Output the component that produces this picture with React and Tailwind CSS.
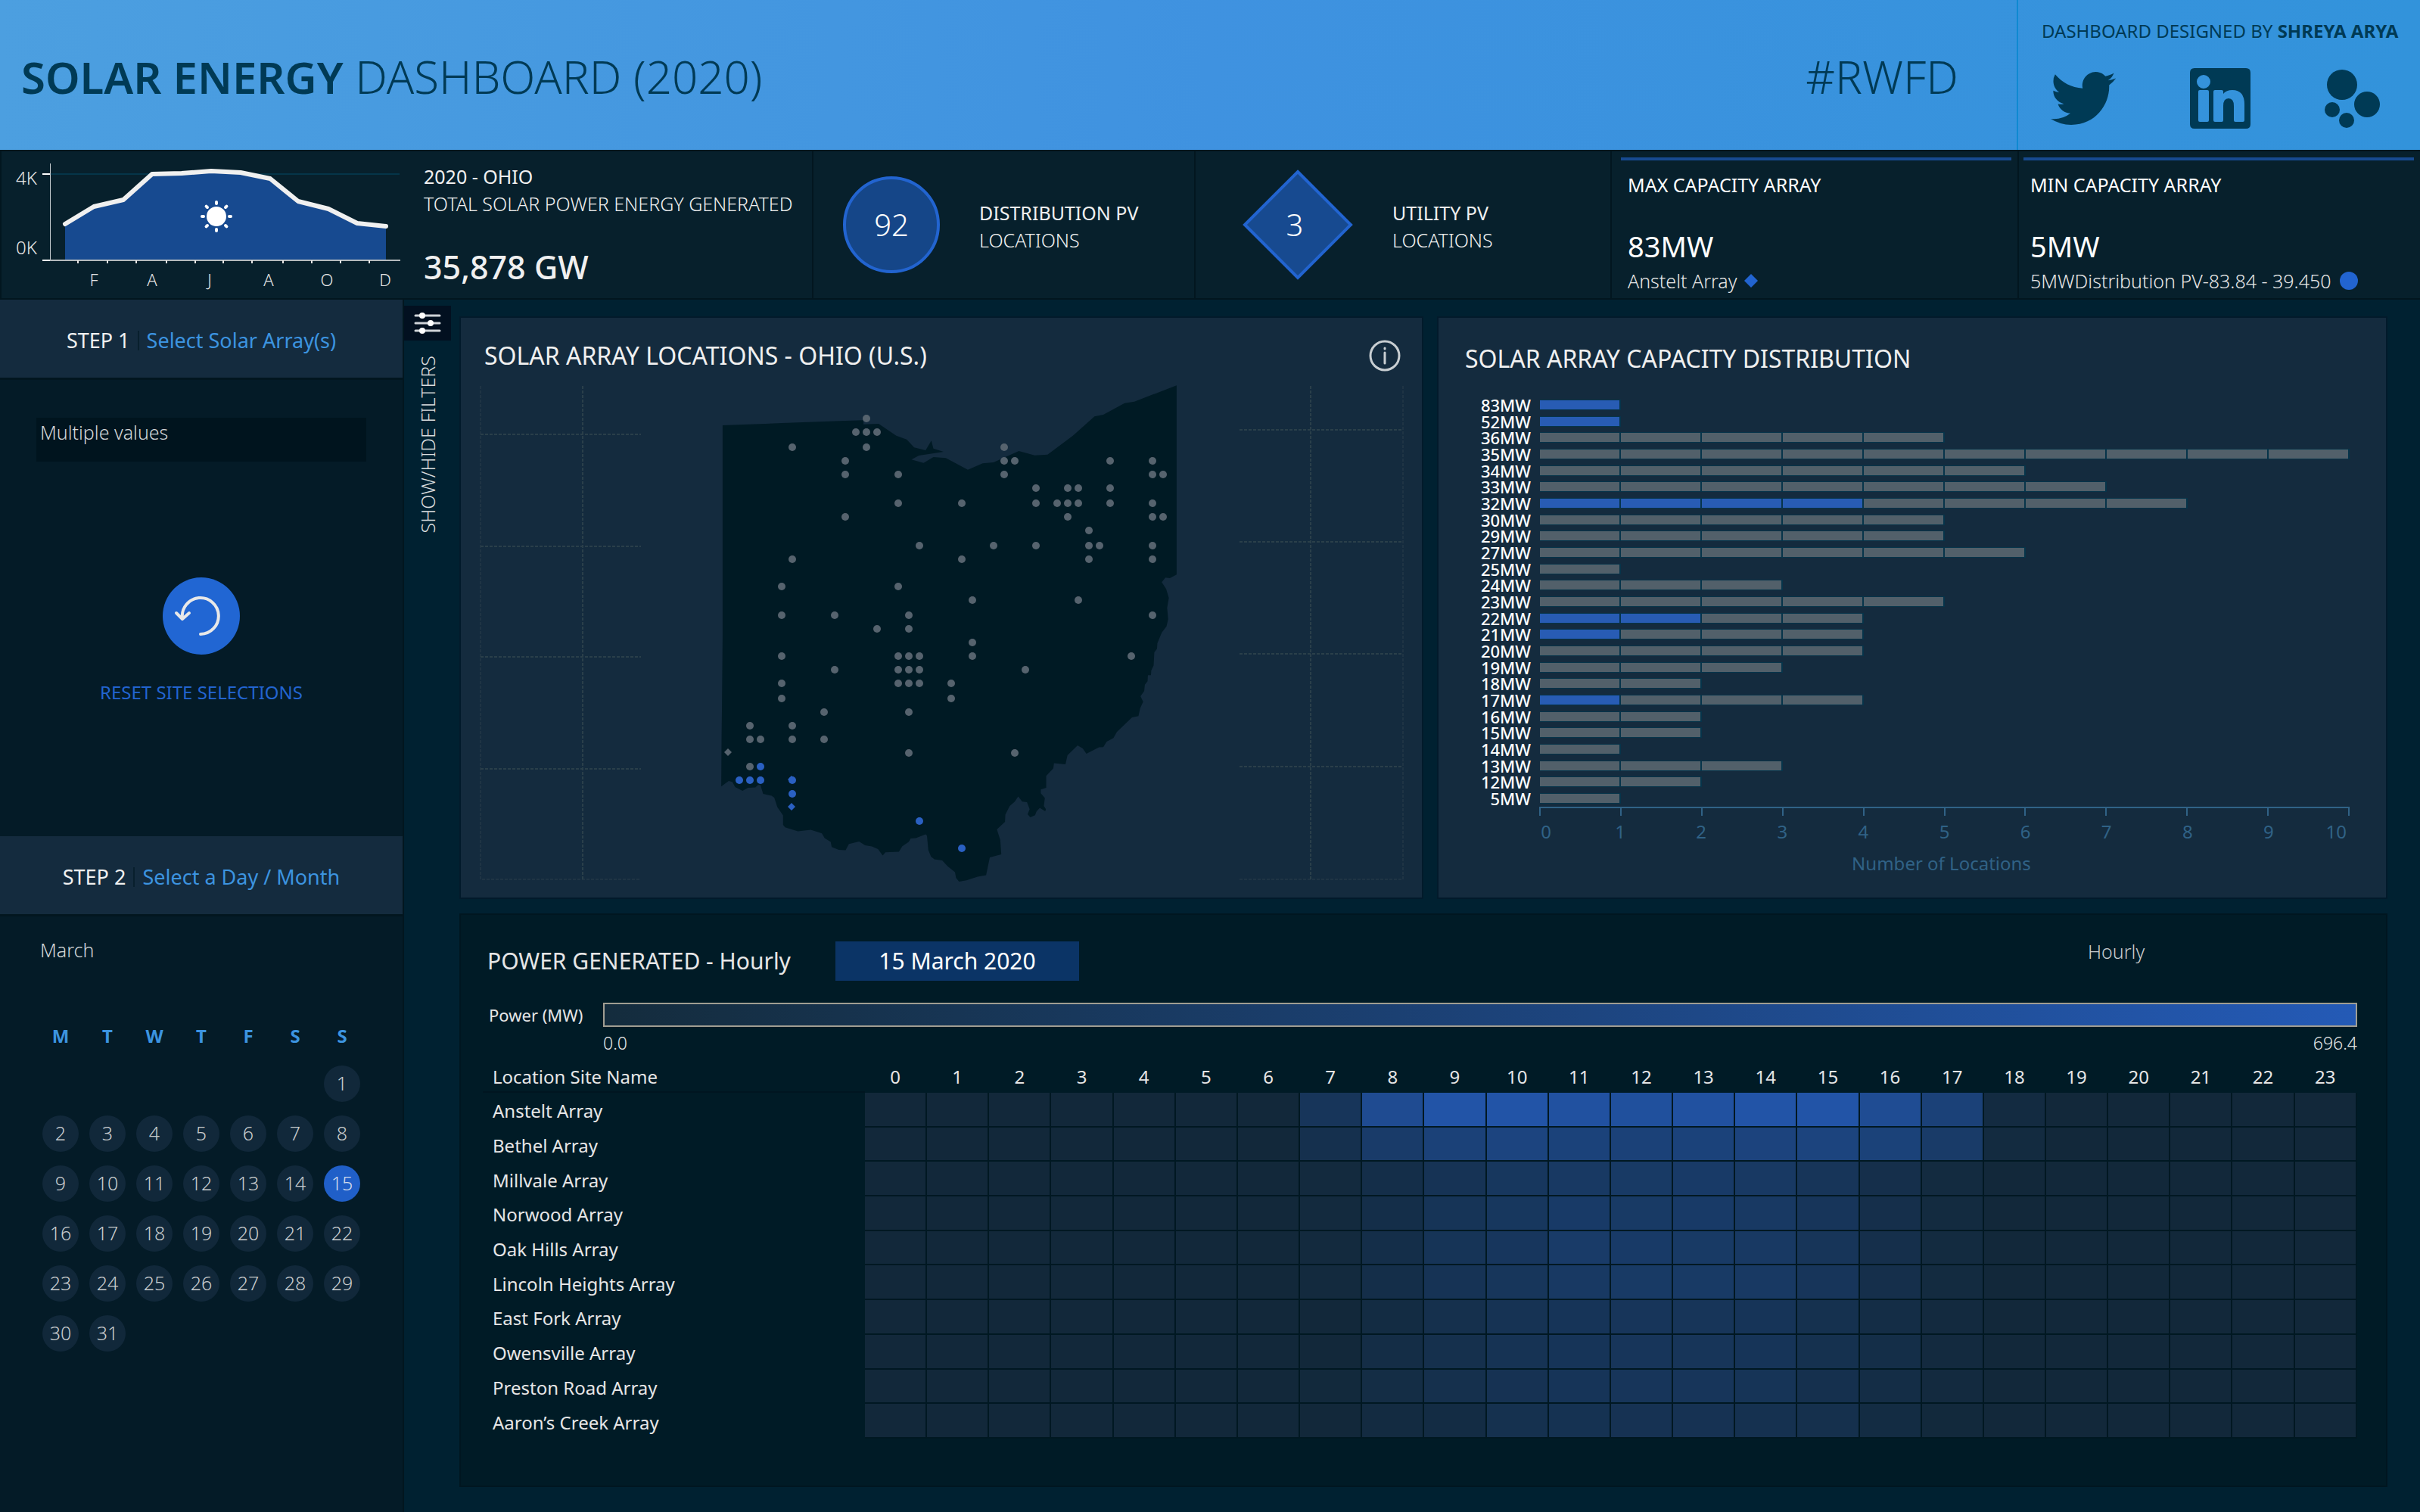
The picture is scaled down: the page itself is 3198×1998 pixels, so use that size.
/**
 * Solar Energy Dashboard
 * Single page: header, KPI strip, filter sidebar, map, distribution and hourly heatmap
 */

import React from 'react';

// ==================== DATA ====================
const MONTHLY = [
  [86, 296], [124, 273], [163, 264], [201, 230], [240, 229], [279, 226],
  [318, 228], [357, 236], [394, 266], [434, 276], [472, 295], [510, 299],
];

const MONTH_LABELS = [
  { x: 124, label: 'F' },
  { x: 201, label: 'A' },
  { x: 277, label: 'J' },
  { x: 355, label: 'A' },
  { x: 432, label: 'O' },
  { x: 509, label: 'D' },
];

const MONTH_TICKS = [103, 142, 180, 220, 258, 295, 333, 374, 412, 450, 488];

// capacity label, total locations, selected locations
const CAPACITY = [
  ['83MW', 1, 1], ['52MW', 1, 1], ['36MW', 5, 0], ['35MW', 10, 0], ['34MW', 6, 0],
  ['33MW', 7, 0], ['32MW', 8, 4], ['30MW', 5, 0], ['29MW', 5, 0], ['27MW', 6, 0],
  ['25MW', 1, 0], ['24MW', 3, 0], ['23MW', 5, 0], ['22MW', 4, 2], ['21MW', 4, 1],
  ['20MW', 4, 0], ['19MW', 3, 0], ['18MW', 2, 0], ['17MW', 4, 1], ['16MW', 2, 0],
  ['15MW', 2, 0], ['14MW', 1, 0], ['13MW', 3, 0], ['12MW', 2, 0], ['5MW', 1, 0],
];

// map rows: y, columns of unselected sites, columns of selected sites
const SITES = [
  [553, [12], []],
  [571, [11, 12, 13], []],
  [591, [5, 12, 25], []],
  [609, [10, 25, 26, 35, 39], []],
  [627, [10, 15, 25, 39, 40], []],
  [645, [28, 31, 32, 35], []],
  [665, [15, 21, 28, 30, 31, 32, 35, 39], []],
  [683, [10, 31, 39, 40], []],
  [701, [33], []],
  [721, [17, 24, 28, 33, 34, 39], []],
  [739, [5, 21, 33, 39], []],
  [775, [4, 15], []],
  [793, [22, 32], []],
  [813, [4, 9, 16, 39], []],
  [831, [13, 16], []],
  [849, [22], []],
  [867, [4, 15, 16, 17, 22, 37], []],
  [885, [9, 15, 16, 17, 27], []],
  [903, [4, 15, 16, 17, 20], []],
  [923, [4, 20], []],
  [941, [8, 16], []],
  [959, [1, 5], []],
  [977, [1, 2, 5, 8], []],
  [995, [16, 26], []],
  [1013, [1], [2]],
  [1031, [], [0, 1, 2, 5]],
  [1049, [], [5]],
  [1085, [], [17]],
  [1121, [], [21]],
];

const OHIO =
  'M123 216L170 214L300 207L470 199L540 196L540 212L585 210L637 257L668 272L690 304L724 315L741 277L747 308L777 321L704 336L682 352L718 365L747 342L784 346L849 392L893 367L925 363L1000 318L1047 335L1085 332L1160 257L1224 181L1250 174L1313 128L1342 122L1467 58L1467 808L1447 822L1434 820L1423 838L1436 865L1444 900L1439 940L1442 985L1437 1013L1423 1038L1410 1080L1409 1102L1401 1116L1399 1168L1392 1188L1391 1207L1382 1207L1381 1231L1373 1244L1371 1270L1360 1290L1368 1312L1359 1338L1354 1369L1335 1374L1290 1432L1280 1456L1260 1470L1250 1492L1237 1493L1200 1518L1189 1497L1174 1485L1144 1524L1138 1560L1104 1556L1102 1576L1081 1606L1081 1653L1065 1660L1065 1675L1077 1694L1074 1725L1080 1738L1078 1746L1062 1733L1052 1748L1048 1762L1034 1770L1026 1758L1032 1738L1024 1710L1010 1708L998 1688L988 1708L973 1725L960 1760L959 1788L935 1818L945 1860L948 1917L914 1929L903 2000L878 2006L845 2020L823 2025L814 2010L811 1988L790 1965L773 1941L750 1937L740 1926L732 1900L728 1843L724 1838L695 1853L680 1854L674 1868L655 1885L645 1907L605 1909L597 1922L583 1896L565 1886L545 1881L527 1866L497 1876L487 1901L467 1899L446 1888L443 1868L425 1853L417 1834L384 1820L346 1826L308 1810L302 1800L302 1763L285 1730L276 1692L268 1685L243 1677L235 1642L228 1642L220 1652L198 1653L182 1665L160 1650L152 1630L141 1626L119 1648L120 1450L121 1350L123 1050Z';

// hourly output from 7:00 to 18:00, in percent of the scale maximum
const HEATMAP = [
  ['Anstelt Array', [26, 70, 88, 88, 82, 80, 82, 88, 88, 72, 50, 6]],
  ['Bethel Array', [16, 38, 50, 56, 52, 50, 52, 54, 55, 51, 37, 5]],
  ['Millvale Array', [3, 12, 22, 29, 33, 35, 36, 33, 25, 14, 5, 0]],
  ['Norwood Array', [3, 12, 23, 29, 36, 35, 36, 33, 26, 14, 5, 0]],
  ['Oak Hills Array', [3, 12, 23, 28, 37, 36, 35, 33, 25, 14, 5, 0]],
  ['Lincoln Heights Array', [3, 12, 22, 27, 33, 35, 35, 33, 26, 14, 5, 0]],
  ['East Fork Array', [0, 7, 15, 21, 24, 26, 25, 24, 17, 10, 4, 0]],
  ['Owensville Array', [0, 10, 15, 21, 24, 26, 25, 24, 17, 11, 4, 0]],
  ['Preston Road Array', [2, 9, 15, 20, 24, 26, 26, 23, 16, 10, 4, 0]],
  ['Aaron’s Creek Array', [0, 6, 8, 17, 19, 20, 20, 18, 15, 7, 2, 0]],
];

const HOURS = Array.from({ length: 24 }, (_, i) => i);
const DAYS = Array.from({ length: 31 }, (_, i) => i + 1);
const WEEKDAYS = ['M', 'T', 'W', 'T', 'F', 'S', 'S'];

const LOW = [18, 40, 58];
const HIGH = [36, 90, 182];

const heatColor = (percent) => {
  const [r, g, b] = LOW.map((c, i) => Math.round(c + ((HIGH[i] - c) * percent) / 100));
  return `rgb(${r}, ${g}, ${b})`;
};

// ==================== HEADER ====================
const TwitterIcon = () => (
  <svg viewBox="0 0 24 24" className="w-[86px] h-[86px]" fill="currentColor" aria-hidden="true">
    <path d="M23.953 4.57a10 10 0 01-2.825.775 4.958 4.958 0 002.163-2.723c-.951.555-2.005.959-3.127 1.184a4.92 4.92 0 00-8.384 4.482C7.69 8.095 4.067 6.13 1.64 3.162a4.822 4.822 0 00-.666 2.475c0 1.71.87 3.213 2.188 4.096a4.904 4.904 0 01-2.228-.616v.06a4.923 4.923 0 003.946 4.827 4.996 4.996 0 01-2.212.085 4.936 4.936 0 004.604 3.417 9.867 9.867 0 01-6.102 2.105c-.39 0-.779-.023-1.17-.067a13.995 13.995 0 007.557 2.209c9.053 0 13.998-7.496 13.998-13.985 0-.21 0-.42-.015-.63A9.935 9.935 0 0024 4.59z" />
  </svg>
);

const LinkedinIcon = () => (
  <svg viewBox="0 0 80 80" className="w-20 h-20" aria-hidden="true">
    <path
      fill="currentColor"
      fillRule="evenodd"
      d="M6 0H74Q80 0 80 6V74Q80 80 74 80H6Q0 80 0 74V6Q0 0 6 0ZM18 9A9 9 0 1 0 18 27A9 9 0 1 0 18 9ZM13 29Q11 29 11 31V69Q11 71 13 71H23Q25 71 25 69V31Q25 29 23 29ZM33 29Q31 29 31 31V69Q31 71 33 71H42Q44 71 44 69V50Q44 40 51 40Q58 40 58 50V69Q58 71 60 71H70Q72 71 72 69V48Q72 29 56 29Q48 29 44 34V31Q44 29 42 29Z"
    />
  </svg>
);

const DotsIcon = () => (
  <svg viewBox="0 0 74 80" className="w-[74px] h-20" fill="currentColor" aria-hidden="true">
    <circle cx="23" cy="22" r="20" />
    <circle cx="56" cy="48" r="17" />
    <circle cx="10" cy="55" r="10" />
    <circle cx="29" cy="69" r="10" />
  </svg>
);

const Header = () => (
  <header className="flex h-[198px] bg-linear-to-r from-[#4c9fe0] via-[#3f92e0] to-[#3293db] text-[#003a55]">
    <div className="flex flex-1 items-center justify-between pt-1 pl-7 pr-[77px] text-[60px] leading-[72px]">
      <h1 className="font-light">
        <strong className="text-[58px] font-semibold">SOLAR ENERGY</strong> DASHBOARD (2020)
      </h1>
      <p className="font-light">#RWFD</p>
    </div>
    <div className="flex w-[533px] flex-col border-l-2 border-[#0f89d1] pt-[23px] pl-[31px] pr-7">
      <p className="text-2xl leading-9 whitespace-nowrap">
        DASHBOARD DESIGNED BY <strong className="font-bold">SHREYA ARYA</strong>
      </p>
      <div className="mt-7 flex items-center justify-between pr-6 pl-3">
        <a href="#twitter" aria-label="Twitter"><TwitterIcon /></a>
        <a href="#linkedin" aria-label="LinkedIn"><LinkedinIcon /></a>
        <a href="#portfolio" aria-label="Portfolio"><DotsIcon /></a>
      </div>
    </div>
  </header>
);

// ==================== KPI STRIP ====================
const Sparkline = () => {
  const line = MONTHLY.map(([x, y]) => `${x},${y}`).join(' ');

  return (
    <svg viewBox="2 200 556 194" className="w-[556px] shrink-0" role="img" aria-label="Monthly energy">
      <path d="M66 230H528" stroke="#053549" strokeWidth="2" />
      <polygon points={`86,343 ${line} 510,343`} fill="#174a90" />
      <polyline points={line} fill="none" stroke="#f0f0f0" strokeWidth="6" strokeLinejoin="round" strokeLinecap="round" />
      <path d="M66.500 216V343" stroke="#c5cbcf" strokeWidth="1" />
      <path d="M56 344H529" stroke="#b4babd" strokeWidth="2" />
      <path d="M56 344H66M56 230H66" stroke="#ffffff" strokeWidth="2" />
      {MONTH_TICKS.map((x) => (
        <path key={x} d={`M${x} 344V348`} stroke="#e6e6e6" strokeWidth="2" />
      ))}
      <g fill="#ffffff" stroke="#ffffff" strokeWidth="4" strokeLinecap="round">
        <circle cx="286" cy="286" r="11" />
        {[0, 45, 90, 135, 180, 225, 270, 315].map((a) => (
          <path key={a} d="M286 267V269" transform={`rotate(${a} 286 286)`} />
        ))}
      </g>
      <g fill="#e6e6e6" fontSize="24" fontWeight="300" textAnchor="middle">
        <text x="35" y="244">4K</text>
        <text x="35" y="336">0K</text>
        {MONTH_LABELS.map(({ x, label }) => (
          <text key={x} x={x} y="378" fontSize="22">{label}</text>
        ))}
      </g>
    </svg>
  );
};

const CapacityStat = ({ title, value, name, marker, last = false }) => (
  <div className={last ? 'pt-2 pl-[6px]' : 'border-r-2 border-[#02161f] pt-2 pl-3'}>
    <div className="mr-2 h-1 bg-[#174a90]" />
    <div className="mt-[14px] pl-[9px] text-[25px] leading-9 whitespace-nowrap">
      <p className="text-white">{title}</p>
      <p className="mt-[39px] text-[38px] leading-12 text-white">{value}</p>
      <p className="mt-1 flex items-center font-light text-[#e6e6e6]">
        {name}
        {marker}
      </p>
    </div>
  </div>
);

const KpiStrip = () => (
  <section className="grid h-[198px] grid-cols-[1075fr_505fr_550fr_538fr_530fr] border-y-2 border-[#02161f] bg-[#07202c] text-[25px] leading-9 text-[#f0f0f0]">
    <div className="flex border-r-2 border-l-2 border-[#02161f]">
      <Sparkline />
      <div className="pt-[15px] pl-[2px] whitespace-nowrap">
        <p>2020 - OHIO</p>
        <p className="font-light">TOTAL SOLAR POWER ENERGY GENERATED</p>
        <p className="mt-9 text-[43px] leading-[60px] font-medium">35,878 GW</p>
      </div>
    </div>
    <div className="flex items-center gap-[52px] border-r-2 border-[#02161f] pl-[39px]">
      <div className="flex size-32 items-center justify-center rounded-full border-4 border-[#2264d0] bg-[#154688] text-[40px] font-light text-white">
        92
      </div>
      <div className="pt-1">
        <p>DISTRIBUTION PV</p>
        <p className="font-light">LOCATIONS</p>
      </div>
    </div>
    <div className="flex items-center gap-[52px] border-r-2 border-[#02161f] pl-[62px]">
      <div className="grid size-[146px] place-items-center">
        <svg viewBox="0 0 146 146" className="col-start-1 row-start-1 size-[146px]" aria-hidden="true">
          <path d="M73 3L143 73L73 143L3 73Z" fill="#174a90" stroke="#2264d0" strokeWidth="4" />
        </svg>
        <span className="col-start-1 row-start-1 pr-2 text-[40px] font-light text-white">3</span>
      </div>
      <div className="pt-1">
        <p>UTILITY PV</p>
        <p className="font-light">LOCATIONS</p>
      </div>
    </div>
    <CapacityStat
      title="MAX CAPACITY ARRAY"
      value="83MW"
      name="Anstelt Array"
      marker={
        <svg viewBox="0 0 18 18" className="ml-[10px] size-[18px]" aria-hidden="true">
          <path d="M9 0L18 9L9 18L0 9Z" fill="#2264d0" />
        </svg>
      }
    />
    <CapacityStat
      last
      title="MIN CAPACITY ARRAY"
      value="5MW"
      name="5MWDistribution PV-83.84 - 39.450"
      marker={<span className="ml-3 size-6 rounded-full bg-[#2264d0]" />}
    />
  </section>
);

// ==================== SIDEBAR ====================
const StepHeading = ({ step, label }) => (
  <h2 className="flex h-[106px] items-center justify-center gap-[10px] border-b-3 border-[#02161f] bg-[#142b3e] pt-1 text-[27px] leading-9 font-normal">
    <span className="text-[#f0f0f0]">{step}</span>
    <span className="h-[26px] w-[2px] bg-[#081f2d]" />
    <span className="text-[#3c94e0]">{label}</span>
  </h2>
);

const Sidebar = () => (
  <aside className="w-[534px] shrink-0 border-r-2 border-[#02161f] bg-[#041b27]">
    <StepHeading step="STEP 1" label="Select Solar Array(s)" />
    <div className="px-12 pt-[50px]">
      <select
        aria-label="Solar arrays"
        className="h-[58px] w-full appearance-none bg-[#00141e] pb-5 pl-[5px] text-[25px] leading-9 font-light text-[#d2d6d8]"
      >
        <option>Multiple values</option>
      </select>
    </div>
    <button type="button" className="mx-auto mt-[152px] mb-[172px] flex flex-col items-center text-2xl leading-9 text-[#2264d0]">
      <svg viewBox="0 0 104 104" className="size-[104px]" aria-hidden="true">
        <circle cx="52" cy="52" r="51" fill="#2166d3" />
        <g fill="none" stroke="#e8e8e8" strokeWidth="4" strokeLinecap="round" strokeLinejoin="round">
          <path d="M51 76A24 24 0 1 0 27 55" />
          <path d="M19 48L27 56L36 48" />
        </g>
      </svg>
      <span className="mt-[31px]">RESET SITE SELECTIONS</span>
    </button>
    <StepHeading step="STEP 2" label="Select a Day / Month" />
    <div className="px-12 pt-[26px]">
      <select aria-label="Month" className="h-9 w-full appearance-none bg-transparent pl-[5px] text-[25px] leading-9 font-light text-[#d2d6d8]">
        <option>March</option>
      </select>
    </div>
    <div className="mt-[78px] grid grid-cols-7 justify-items-center px-[49px] text-2xl leading-9 font-bold text-[#3c94e0]">
      {WEEKDAYS.map((day, i) => (
        <span key={i}>{day}</span>
      ))}
    </div>
    <div className="mt-[21px] grid grid-cols-7 justify-items-center gap-y-[18px] px-[49px]">
      {DAYS.map((day) => (
        <button
          key={day}
          type="button"
          className={`size-12 rounded-full text-[25px] font-light ${day === 1 ? 'col-start-7' : ''} ${
            day === 15 ? 'bg-[#205fc8] text-[#d2dcec]' : 'bg-[#11283a] text-[#c8ccce]'
          }`}
        >
          {day}
        </button>
      ))}
    </div>
  </aside>
);

const FilterRail = () => (
  <div className="flex w-[62px] shrink-0 flex-col items-center pt-2">
    <button type="button" aria-label="Show or hide filters" className="flex h-[46px] w-full items-center justify-center bg-[#021020]">
      <svg viewBox="0 0 36 30" className="h-[30px] w-9" aria-hidden="true">
        <path d="M2 5H34M2 15H34M2 25H34" stroke="#cfd3d8" strokeWidth="3" strokeLinecap="round" />
        <circle cx="11" cy="5" r="4" fill="#ffffff" />
        <circle cx="22" cy="15" r="4" fill="#ffffff" />
        <circle cx="11" cy="25" r="4" fill="#ffffff" />
      </svg>
    </button>
    <span className="mt-5 rotate-180 text-[25px] leading-9 font-light whitespace-nowrap text-[#d8dcde] [writing-mode:vertical-rl]">
      SHOW/HIDE FILTERS
    </span>
  </div>
);

// ==================== MAP ====================
const siteX = (col) => 977 + col * 14;

const MapPanel = () => (
  <section className="border-2 border-[#021a2b] bg-[#142b3e] px-[23px] pt-[26px] pb-[14px]">
    <div className="flex items-center justify-between pr-1 pl-2">
      <h2 className="text-[32px] leading-12 font-normal text-[#f0f0f0]">SOLAR ARRAY LOCATIONS - OHIO (U.S.)</h2>
      <button type="button" aria-label="About this map">
        <svg viewBox="0 0 44 44" className="size-11" fill="none" stroke="#c8ced2" strokeWidth="3" strokeLinecap="round" aria-hidden="true">
          <circle cx="22" cy="22" r="19" />
          <path d="M22 18V32M22 12V13" />
        </svg>
      </button>
    </div>
    <svg viewBox="632 504 1224 668" className="mt-[10px] w-full" role="img" aria-label="Map of solar arrays in Ohio">
      <g fill="none" stroke="#2a3f4a" strokeWidth="2" strokeDasharray="4 2">
        <path d="M635 574H847M635 722H847M635 868H847M635 1016H847M770 510V1162" />
        <path d="M1638 568H1854M1638 716H1854M1638 864H1854M1638 1013H1854M1732 510V1162" />
        <path d="M635 510V1162H847M1854 510V1162H1638" strokeWidth="1" />
      </g>
      <path d={OHIO} fill="#001a24" transform="translate(900 490) scale(0.4464 0.3333)" />
      {SITES.map(([y, idle, selected]) => (
        <g key={y}>
          {idle.map((col) => (
            <circle key={col} cx={siteX(col)} cy={y} r="5" fill="#56636e" />
          ))}
          {selected.map((col) => (
            <circle key={col} cx={siteX(col)} cy={y} r="5" fill="#2a60c2" />
          ))}
        </g>
      ))}
      <path d="M962 989L967 994L962 999L957 994Z" fill="#56636e" />
      <path d="M1046 1025L1051 1030L1046 1035L1041 1030ZM1046 1061L1051 1066L1046 1071L1041 1066Z" fill="#2a60c2" />
    </svg>
  </section>
);

// ==================== CAPACITY DISTRIBUTION ====================
const CapacityRow = ({ label, total, selected }) => (
  <div className="grid grid-cols-[122px_1fr] items-center gap-3">
    <span className="text-right text-[22px] leading-5 font-medium text-white">{label}</span>
    <div className="grid grid-cols-10">
      {Array.from({ length: total }, (_, i) => (
        <span
          key={i}
          className={`h-[14px] border-y border-r-2 border-[#06344a] ${i < selected ? 'bg-[#285cb4]' : 'bg-[#52606a]'}`}
        />
      ))}
    </div>
  </div>
);

const CapacityPanel = () => (
  <section className="border-2 border-[#021a2b] bg-[#142b3e] pt-[30px] pr-12">
    <h2 className="pl-[35px] text-[32px] leading-12 font-normal text-[#f0f0f0]">SOLAR ARRAY CAPACITY DISTRIBUTION</h2>
    <div className="mt-[26px] grid h-[542px] auto-rows-fr">
      {CAPACITY.map(([label, total, selected]) => (
        <CapacityRow key={label} label={label} total={total} selected={selected} />
      ))}
    </div>
    <div className="ml-[133px] text-[#306286]">
      <div className="grid h-3 grid-cols-10 border-t-2 border-r-2 border-[#306286]">
        {Array.from({ length: 10 }, (_, i) => (
          <span key={i} className="border-l-2 border-[#306286]" />
        ))}
      </div>
      <div className="mt-[3px] grid grid-cols-10 text-2xl leading-9">
        {Array.from({ length: 10 }, (_, i) => (
          <span key={i} className="flex justify-between">
            <span className={i === 0 ? 'flex w-[18px] justify-center' : 'flex w-0 justify-center'}>{i}</span>
            {i === 9 && <span className="pr-1">10</span>}
          </span>
        ))}
      </div>
      <p className="mt-[6px] pr-2 text-center text-2xl leading-9">Number of Locations</p>
    </div>
  </section>
);

// ==================== HOURLY POWER ====================
const PowerPanel = () => (
  <section className="mt-[19px] flex-1 border-2 border-[#001620] bg-[#001b26] px-[29px] pt-[35px] text-[#e6e6e6]">
    <div className="flex items-start pr-[9px] pl-[6px]">
      <h2 className="w-[460px] text-[30px] leading-[52px] font-normal whitespace-nowrap">POWER GENERATED - Hourly</h2>
      <p className="w-[322px] bg-[#0b3466] text-center text-[30px] leading-[52px] text-white">15 March 2020</p>
      <select
        aria-label="Granularity"
        className="-mt-[5px] ml-auto h-9 w-[356px] appearance-none bg-transparent text-[25px] leading-9 font-light text-[#c8ccce]"
      >
        <option>Hourly</option>
      </select>
    </div>
    <div className="mt-[29px] flex pr-[9px] pl-2">
      <span className="w-[151px] text-[22px] leading-8">Power (MW)</span>
      <div className="flex-1">
        <div className="h-8 border-2 border-[#a09e92] bg-linear-to-r from-[#142c3d] via-[#1c4278] to-[#245ab6]" />
        <div className="mt-[5px] flex justify-between text-[23px] leading-8 font-light">
          <span>0.0</span>
          <span>696.4</span>
        </div>
      </div>
    </div>
    <div className="mt-[11px] pr-[9px]">
      <table className="h-[496px] w-full table-fixed border-separate border-spacing-0 text-2xl leading-9">
        <thead>
          <tr className="h-[39px] align-top">
            <th className="w-[505px] border-b-2 border-[#001520] p-0 pl-[13px] text-left font-normal">Location Site Name</th>
            {HOURS.map((hour) => (
              <th key={hour} className="p-0 pr-[2px] text-center font-normal">{hour}</th>
            ))}
          </tr>
        </thead>
        <tbody>
          {HEATMAP.map(([site, values]) => (
            <tr key={site}>
              <th scope="row" className="p-0 pt-[3px] pl-[13px] text-left font-normal">{site}</th>
              {HOURS.map((hour) => (
                <td
                  key={hour}
                  className="border-r-2 border-b-2 border-[#001822] p-0"
                  style={{ backgroundColor: heatColor(values[hour - 7] || 0) }}
                />
              ))}
            </tr>
          ))}
        </tbody>
      </table>
    </div>
  </section>
);

// ==================== PAGE ====================
export default function App() {
  return (
    <div className="flex min-h-screen flex-col bg-[#002131] font-['Noto_Sans','Open_Sans',sans-serif]">
      <Header />
      <KpiStrip />
      <main className="flex flex-1">
        <Sidebar />
        <FilterRail />
        <div className="flex flex-1 flex-col pt-[22px] pr-[43px] pb-[33px] pl-[11px]">
          <div className="grid grid-cols-[1274fr_1256fr] gap-[18px]">
            <MapPanel />
            <CapacityPanel />
          </div>
          <PowerPanel />
        </div>
      </main>
    </div>
  );
}
